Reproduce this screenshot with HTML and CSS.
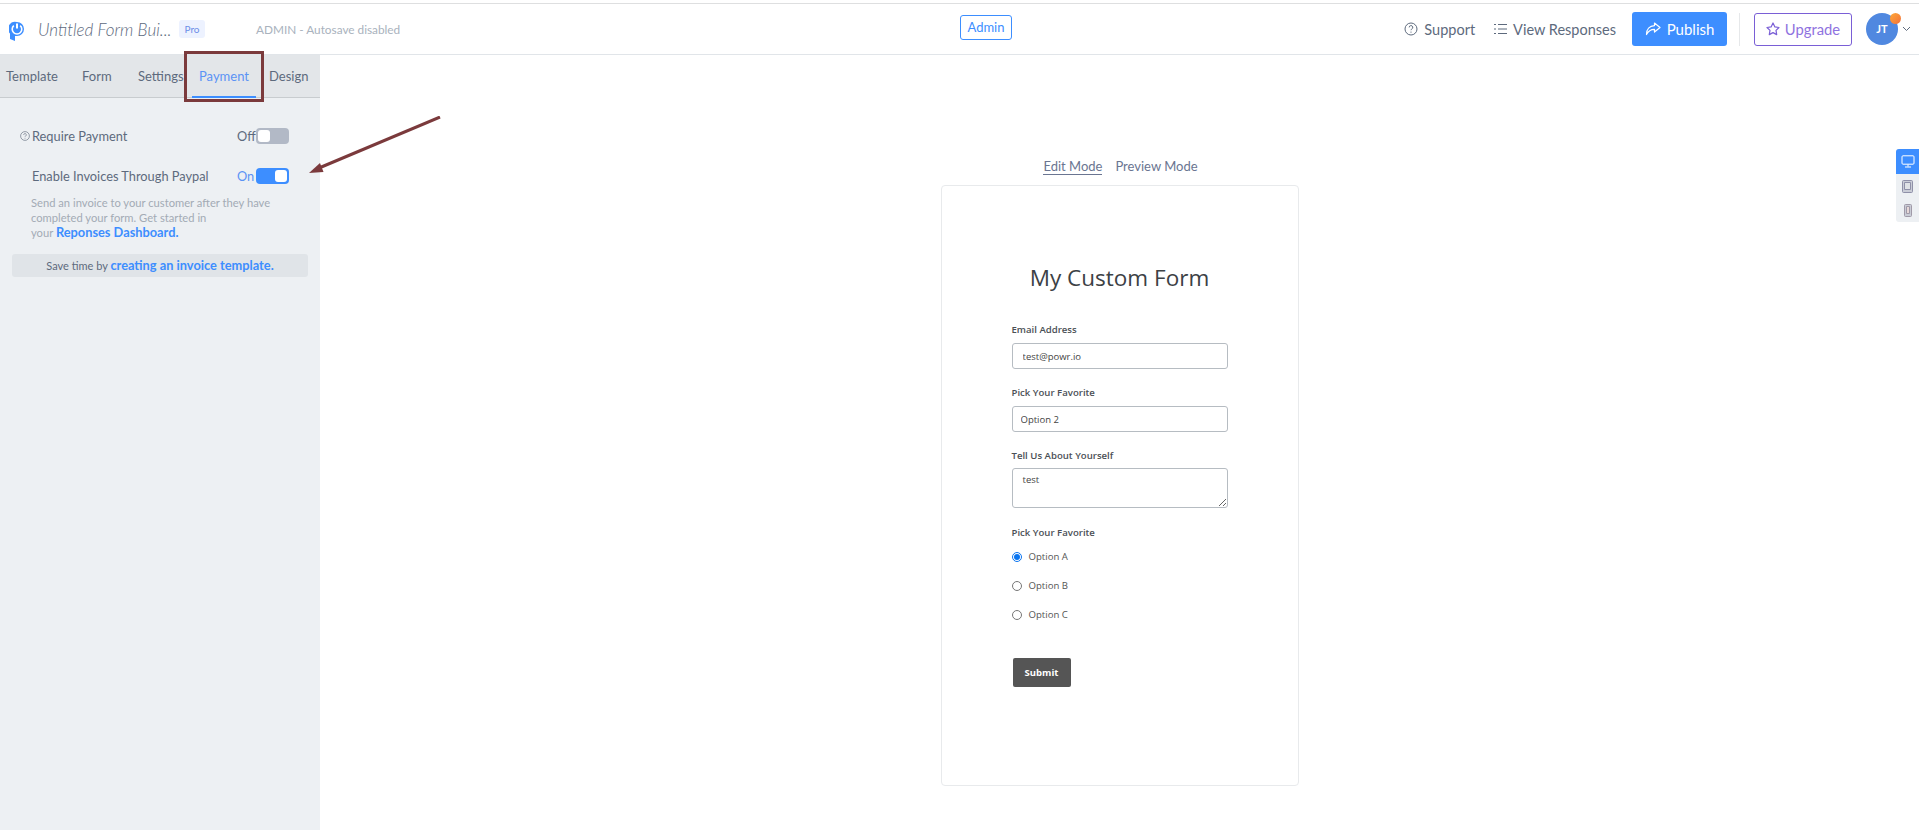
FILE: index.html
```html
<!DOCTYPE html>
<html lang="en">
<head>
    <meta charset="UTF-8">
    <title>Form Builder</title>
    <link rel="stylesheet" href="styles.css">
</head>
<body>
    <header class="topbar">
        <div class="brand">
            <svg class="logo" width="16" height="20" viewBox="0 0 16 20">
                <path d="M8 1a7 7 0 0 1 0 14H6v5l-5-2v-5.5A7 7 0 0 1 8 1z" fill="#3d8eff"/>
                <path d="M4.800 4.600a4.800 4.800 0 1 0 6.400 0" fill="none" stroke="#fff" stroke-width="1.600"/>
                <path d="M8 2.500v5" stroke="#fff" stroke-width="2"/>
            </svg>
            <span class="app-title">Untitled Form Bui...</span>
            <span class="pro">Pro</span>
            <span class="autosave">ADMIN - Autosave disabled</span>
        </div>
        <div class="center">
            <button class="admin-btn">Admin</button>
        </div>
        <div class="actions">
            <a class="action">
                <svg width="14" height="14" viewBox="0 0 14 14" fill="none" stroke="#5d6a7d">
                    <circle cx="7" cy="7" r="6"/>
                    <path d="M5.200 5.400a1.800 1.800 0 1 1 2.600 1.600c-.6.3-.8.6-.8 1.200"/>
                    <path d="M7 9.600v1.100"/>
                </svg>
                Support
            </a>
            <a class="action action-list">
                <svg width="13" height="12" viewBox="0 0 13 12" fill="none" stroke="#5d6a7d">
                    <path d="M0 1.500h2M4 1.500h9M0 6h2M4 6h9M0 10.500h2M4 10.500h9"/>
                </svg>
                View Responses
            </a>
            <button class="publish">
                <svg width="16" height="14" viewBox="0 0 16 14" fill="none" stroke="#fff" stroke-width="1.200" stroke-linejoin="round">
                    <path d="M9.500 1l5.500 4.500L9.500 10V7.300C6 7.200 3.500 8.600 1.500 12.500 1.500 7.500 4.500 3.800 9.500 3.600z"/>
                </svg>
                Publish
            </button>
            <span class="divider"></span>
            <button class="upgrade">
                <svg width="14" height="14" viewBox="0 0 14 14" fill="none" stroke="#7a5fd6" stroke-width="1.200" stroke-linejoin="round">
                    <path d="M7 1l1.900 3.900 4.100.6-3 2.900.7 4.200L7 10.600l-3.700 2 .7-4.200-3-2.900 4.100-.6z"/>
                </svg>
                Upgrade
            </button>
            <div class="avatar">JT<span class="dot"></span></div>
            <svg class="caret" width="9" height="6" viewBox="0 0 9 6" fill="none" stroke="#5d6a7d">
                <path d="M1 1l3.500 3.500L8 1"/>
            </svg>
        </div>
    </header>

    <div class="layout">
        <aside class="sidebar">
            <nav class="tabs">
                <a class="tab">Template</a>
                <a class="tab">Form</a>
                <a class="tab">Settings</a>
                <a class="tab active">Payment</a>
                <a class="tab">Design</a>
            </nav>
            <div class="panel">
                <div class="row">
                    <svg class="help" width="10" height="10" viewBox="0 0 10 10" fill="none" stroke="#7d8794" stroke-width=".8">
                        <circle cx="5" cy="5" r="4.400"/>
                        <path d="M3.700 3.900a1.300 1.300 0 1 1 1.900 1.100c-.4.2-.6.5-.6.9M5 6.800v.8"/>
                    </svg>
                    <span class="row-label">Require Payment</span>
                    <span class="state">Off</span>
                    <span class="toggle"><span class="knob"></span></span>
                </div>
                <div class="row row-on">
                    <span class="row-label">Enable Invoices Through Paypal</span>
                    <span class="state state-on">On</span>
                    <span class="toggle toggle-on"><span class="knob"></span></span>
                </div>
                <p class="hint">
                    Send an invoice to your customer after they have<br>
                    completed your form. Get started in<br>
                    your <a class="link">Reponses Dashboard.</a>
                </p>
                <div class="banner">Save time by <a class="link">creating an invoice template.</a></div>
            </div>
        </aside>

        <main class="canvas">
            <div class="modes">
                <a class="mode mode-active">Edit Mode</a>
                <a class="mode">Preview Mode</a>
            </div>
            <section class="card">
                <h1>My Custom Form</h1>
                <label class="field-label">Email Address</label>
                <input class="field" type="text" value="test@powr.io">
                <label class="field-label">Pick Your Favorite</label>
                <input class="field field-select" type="text" value="Option 2">
                <label class="field-label">Tell Us About Yourself</label>
                <textarea class="field field-area">test</textarea>
                <label class="field-label">Pick Your Favorite</label>
                <div class="radios">
                    <label class="radio"><input type="radio" name="fav" checked>Option A</label>
                    <label class="radio"><input type="radio" name="fav">Option B</label>
                    <label class="radio"><input type="radio" name="fav">Option C</label>
                </div>
                <button class="submit">Submit</button>
            </section>
        </main>
    </div>

    <div class="devices">
        <span class="device device-active">
            <svg width="14" height="13" viewBox="0 0 14 13" fill="none" stroke="#fff">
                <rect x="1" y=".8" width="12" height="8.400" rx="1"/>
                <path d="M7 9.500v2M4 12h6"/>
            </svg>
        </span>
        <span class="device">
            <svg width="11" height="13" viewBox="0 0 11 13" fill="#c9ccd6" stroke="#8f90a8">
                <rect x=".5" y=".5" width="10" height="12" rx="1"/>
                <path d="M2.500 2.500h6v7h-6z" fill="#dfe2e6"/>
            </svg>
        </span>
        <span class="device">
            <svg width="8" height="13" viewBox="0 0 8 13" fill="#c9ccd6" stroke="#a09aa8">
                <rect x=".5" y=".5" width="7" height="12" rx="1"/>
                <path d="M2.500 2.500h3v7h-3z" fill="#e6d8d8"/>
            </svg>
        </span>
    </div>

    <!-- annotations on top of the screenshot -->
    <div class="callout"></div>
    <svg class="arrow" width="134" height="60" viewBox="0 0 134 60">
        <path d="M131 1L10 52" stroke="#7b3a3c" stroke-width="3" fill="none"/>
        <path d="M0 57l11-10 3.500 9z" fill="#7b3a3c"/>
    </svg>
</body>
</html>
```

FILE: styles.css
```css
* {
    margin: 0;
    padding: 0;
    box-sizing: border-box;
    font-family: 'Lato', sans-serif;
}

html, body {
    height: 830px;
    overflow: hidden;
}

body {
    background-color: white;
    color: #5d6a7d;
    padding-top: 3px;
}

a {
    text-decoration: none;
}

.topbar {
    height: 52px;
    display: grid;
    grid-template-columns: 960px 1fr auto;
    align-items: center;
    border-top: 1px solid #dedfe0;
    border-bottom: 1px solid #e1e5e9;
}

.brand {
    display: flex;
    align-items: center;
    padding-left: 9px;
}

.logo {
    margin-top: 4px;
}

.app-title {
    font-size: 17px;
    font-style: italic;
    font-weight: 300;
    margin-left: 13px;
    width: 141px;
    white-space: nowrap;
}

.pro {
    background-color: #edf2ff;
    color: #6d8fe8;
    font-size: 10px;
    width: 26px;
    height: 18px;
    line-height: 18px;
    text-align: center;
    border-radius: 3px;
}

.autosave {
    color: #a9b2bd;
    font-size: 11.800px;
    margin-left: 51px;
}

.admin-btn {
    width: 52px;
    height: 25px;
    background: white;
    border: 1px solid #3d8eff;
    border-radius: 3px;
    color: #3d8eff;
    font-size: 13px;
    margin-top: -4px;
    display: block;
}

.actions {
    display: flex;
    align-items: center;
    padding-right: 8px;
}

.action {
    display: flex;
    align-items: center;
    gap: 6px;
    font-size: 14.500px;
}

.action-list {
    margin-left: 19px;
}

.publish {
    width: 95px;
    height: 34px;
    margin-left: 16px;
    background-color: #3d8eff;
    color: white;
    border: none;
    border-radius: 3px;
    font-size: 15px;
    display: flex;
    align-items: center;
    justify-content: center;
    gap: 6px;
}

.divider {
    width: 1px;
    height: 33px;
    margin: 0 14px 0 12px;
    background-color: #e6e8ea;
}

.upgrade {
    width: 98px;
    height: 33px;
    background: white;
    border: 1px solid #7a5fd6;
    border-radius: 3px;
    color: #8f73e0;
    font-size: 14.800px;
    display: flex;
    align-items: center;
    justify-content: center;
    gap: 5px;
}

.avatar {
    position: relative;
    width: 32px;
    height: 32px;
    margin-left: 14px;
    border-radius: 50%;
    background-color: #5088e0;
    color: white;
    font-size: 11px;
    font-weight: 700;
    line-height: 32px;
    text-align: center;
}

.dot {
    position: absolute;
    top: 0;
    right: -3px;
    width: 11px;
    height: 11px;
    border-radius: 50%;
    background: linear-gradient(135deg, #ffa938, #f2703a);
}

.caret {
    margin-left: 4px;
}

.layout {
    display: flex;
    height: 775px;
}

.sidebar {
    width: 320px;
    background-color: #edf0f3;
}

.tabs {
    display: flex;
    height: 43px;
    background-color: #e3e6e9;
    border-bottom: 1px solid #c8cccf;
    font-size: 13px;
}

.tab {
    width: 64px;
    text-align: center;
    line-height: 43px;
    flex-shrink: 0;
}

.tab:nth-child(1) {
    width: 51px;
    margin-left: 6px;
}

.tab:nth-child(2) {
    width: 28px;
    margin-left: 25px;
}

.tab:nth-child(3) {
    width: 44px;
    margin-left: 28px;
}

.tab:nth-child(4) {
    margin-left: 10px;
}

.tab:nth-child(5) {
    width: 38px;
    margin-left: 13px;
}

.tab.active {
    color: #5b93f5;
    border-bottom: 2px solid #3d8eff;
    height: 43px;
}

.panel {
    padding-top: 30px;
}

.row {
    display: flex;
    align-items: center;
    height: 16px;
    padding-left: 32px;
    position: relative;
    font-size: 12.800px;
}

.row-on {
    margin-top: 24px;
}

.help {
    position: absolute;
    left: 20px;
    top: 3px;
}

.row-label {
    width: 205px;
}

.state {
    width: 19px;
}

.state-on {
    color: #5b93f5;
}

.toggle {
    width: 33px;
    height: 16px;
    border-radius: 4px;
    background-color: #b2b9c6;
    padding: 2px;
    display: flex;
}

.toggle-on {
    background-color: #3d8eff;
    justify-content: flex-end;
}

.knob {
    width: 12px;
    height: 12px;
    background-color: white;
    border-radius: 3px;
}

.hint {
    margin: 12px 0 0 31px;
    font-size: 11.200px;
    line-height: 14.500px;
    color: #a3abb5;
}

.link {
    color: #3d8eff;
    font-weight: 700;
    font-size: 12.800px;
}

.banner {
    margin: 13px 12px 0;
    height: 23px;
    line-height: 23px;
    background-color: #e0e4e8;
    border-radius: 3px;
    text-align: center;
    font-size: 11px;
}

.canvas {
    flex: 1;
    display: flex;
    flex-direction: column;
    align-items: center;
    padding-top: 102px;
}

.modes {
    display: flex;
    gap: 13px;
    font-size: 13px;
    margin-left: 2px;
    height: 19px;
}

.mode {
    color: #6a7591;
    line-height: 18px;
}

.mode-active {
    border-bottom: 1px solid #6a7591;
    height: 18px;
}

.card {
    width: 358px;
    height: 601px;
    margin-top: 9px;
    border: 1px solid #e8eaec;
    border-radius: 4px;
    padding: 0 70px;
    color: #444;
}

.card * {
    font-family: 'Open Sans', sans-serif;
}

h1 {
    font-size: 22.500px;
    font-weight: 400;
    text-align: center;
    color: #3c4145;
    line-height: 32px;
    margin: 76px -10px 29px;
}

.field-label {
    display: block;
    font-size: 9.600px;
    font-weight: 600;
    color: #4b5056;
    line-height: 14px;
    margin-bottom: 6px;
}

.field {
    display: block;
    width: 216px;
    height: 26px;
    border: 1px solid #b6bcc2;
    border-radius: 3px;
    padding: 0 10px;
    font-size: 9.500px;
    color: #444;
    margin-bottom: 17px;
    background: white;
}

.field-select {
    padding-left: 8px;
}

.field-area {
    height: 40px;
    margin-top: -1px;
    padding-top: 4px;
    line-height: 14px;
    margin-bottom: 18px;
}

.radios {
    margin-top: -4px;
}

.radio {
    display: flex;
    align-items: center;
    gap: 7px;
    height: 29px;
    font-size: 9.600px;
    color: #555;
}

.radio input {
    width: 10px;
    height: 10px;
    accent-color: #0a75f0;
}

.submit {
    display: block;
    width: 58px;
    height: 29px;
    margin-top: 29px;
    margin-left: 1px;
    background-color: #555;
    color: white;
    border: none;
    border-radius: 2px;
    font-size: 9.500px;
    font-weight: 700;
}

.devices {
    position: absolute;
    top: 149px;
    right: 0;
    width: 23px;
    height: 73px;
    background-color: #edf0f3;
    border-radius: 3px 0 0 3px;
    display: flex;
    flex-direction: column;
    align-items: center;
}

.device {
    height: 24px;
    width: 100%;
    display: flex;
    align-items: center;
    justify-content: center;
}

.device-active {
    background-color: #3d8eff;
    border-radius: 3px 0 0 0;
    height: 25px;
}

.callout {
    position: absolute;
    left: 184px;
    top: 51px;
    width: 80px;
    height: 51px;
    border: 3px solid #7b3a3c;
}

.arrow {
    position: absolute;
    left: 309px;
    top: 116px;
}
```
